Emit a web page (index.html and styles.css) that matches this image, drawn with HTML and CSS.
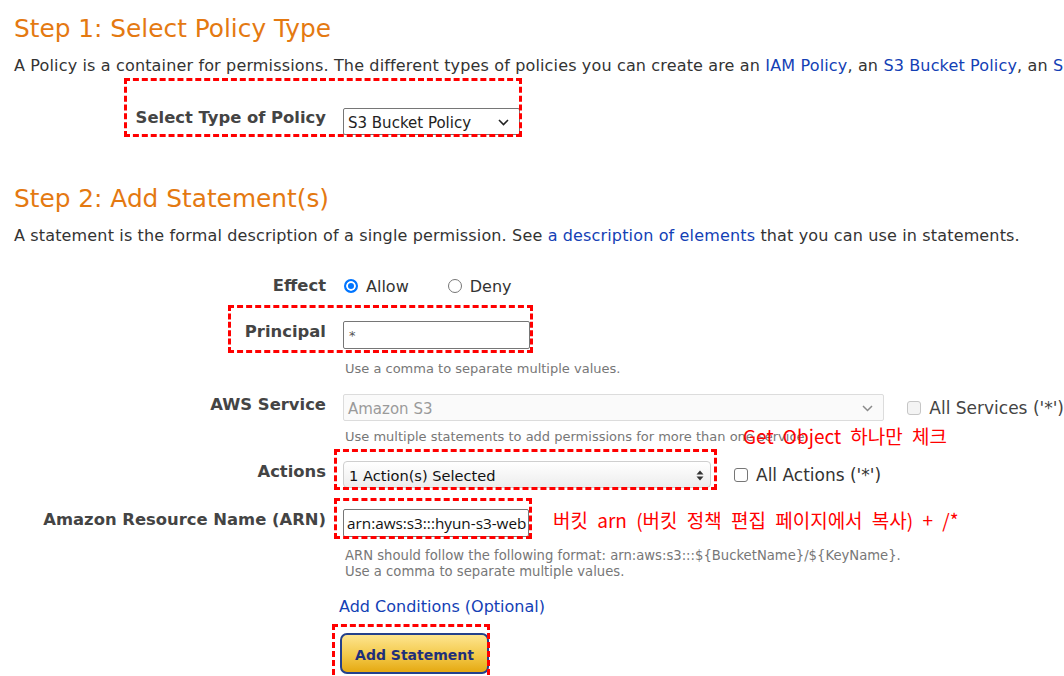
FILE: index.html
```html
<!DOCTYPE html>
<html lang="en">
<head>
<meta charset="utf-8">
<title>AWS Policy Generator</title>
<link rel="stylesheet" href="styles.css">
</head>
<body>
<div class="page">
  <section class="step">
    <h2 class="step-title">Step 1: Select Policy Type</h2>
    <p class="intro">A Policy is a container for permissions. The different types of policies you can create are an <a href="#">IAM Policy</a>, an <a href="#">S3 Bucket Policy</a>, an <a href="#">SNS Topic Policy</a>, a <a href="#">VPC Endpoint Policy</a>, and an <a href="#">SQS Queue Policy</a>.</p>
    <div class="field field-type">
      <div class="label">Select Type of Policy</div>
      <div class="control">
        <div class="select select-type">
          <span>S3 Bucket Policy</span>
          <svg class="chev" width="11" height="7" viewBox="0 0 11 7"><path d="M1 1l4.5 4.5L10 1" fill="none" stroke="#222" stroke-width="1.6"/></svg>
        </div>
      </div>
    </div>
  </section>

  <section class="step step-2">
    <h2 class="step-title">Step 2: Add Statement(s)</h2>
    <p class="intro">A statement is the formal description of a single permission. See <a href="#">a description of elements</a> that you can use in statements.</p>

    <div class="field field-effect">
      <div class="label">Effect</div>
      <div class="control radios">
        <span class="radio checked"></span><span class="radio-text">Allow</span>
        <span class="radio deny"></span><span class="radio-text">Deny</span>
      </div>
    </div>

    <div class="field field-principal">
      <div class="label">Principal</div>
      <div class="control">
        <div class="input input-principal">*</div>
        <div class="help">Use a comma to separate multiple values.</div>
      </div>
    </div>

    <div class="field field-service">
      <div class="label">AWS Service</div>
      <div class="control">
        <div class="line">
          <div class="select select-service">
            <span>Amazon S3</span>
            <svg class="chev" width="11" height="7" viewBox="0 0 11 7"><path d="M1 1l4.5 4.5L10 1" fill="none" stroke="#8a8a8a" stroke-width="1.5"/></svg>
          </div>
          <span class="check disabled"></span><span class="check-text">All Services ('*')</span>
        </div>
        <div class="help help-service">Use multiple statements to add permissions for more than one service.</div>
      </div>
    </div>

    <div class="field field-actions">
      <div class="label">Actions</div>
      <div class="control">
        <div class="line">
          <div class="select select-actions">
            <span>1 Action(s) Selected</span>
            <svg class="updown" width="8" height="11" viewBox="0 0 8 11"><path d="M4 0.5L7.5 4.5H0.5Z M4 10.5L7.5 6.5H0.5Z" fill="#333"/></svg>
          </div>
          <span class="check"></span><span class="check-text">All Actions ('*')</span>
        </div>
      </div>
    </div>

    <div class="field field-arn">
      <div class="label">Amazon Resource Name (ARN)</div>
      <div class="control">
        <div class="line">
          <div class="input input-arn">arn:aws:s3:::hyun-s3-web</div>
          <span class="note note-arn">버킷 arn (버킷 정책 편집 페이지에서 복사) + /*</span>
        </div>
        <div class="help help-arn">ARN should follow the following format: arn:aws:s3:::${BucketName}/${KeyName}.<br>Use a comma to separate multiple values.</div>
      </div>
    </div>

    <div class="field field-cond">
      <div class="label"></div>
      <div class="control">
        <a href="#" class="cond-link">Add Conditions (Optional)</a>
      </div>
    </div>

    <div class="field field-btn">
      <div class="label"></div>
      <div class="control">
        <button class="btn-add" type="button">Add Statement</button>
      </div>
    </div>
  </section>

  <span class="note note-actions">Get Object 하나만 체크</span>
  <div class="mark mark-type"></div>
  <div class="mark mark-principal"></div>
  <div class="mark mark-actions"></div>
  <div class="mark mark-arn"></div>
  <div class="mark mark-btn"></div>
</div>
</body>
</html>
```

FILE: styles.css
```css
html, body {
  margin: 0;
  padding: 0;
  background: #fff;
}
body {
  font-family: "DejaVu Sans", Verdana, sans-serif;
  font-size: 16px;
  color: #333;
  overflow: hidden;
}
.page {
  position: relative;
  width: 1064px;
  height: 676px;
  box-sizing: border-box;
  padding: 13px 0 0 14px;
  overflow: hidden;
}
a {
  color: #1340b5;
  text-decoration: none;
}
.step-title {
  margin: 0;
  font-size: 24.8px;
  font-weight: normal;
  line-height: 32px;
  color: #e47911;
  white-space: nowrap;
}
.intro {
  margin: 11px 0 0;
  line-height: 20px;
  letter-spacing: 0.15px;
  white-space: nowrap;
}
.step-2 {
  margin-top: 48px;
}
.field {
  display: grid;
  grid-template-columns: 312px 1fr;
  column-gap: 17px;
  align-items: start;
}
.label {
  text-align: right;
  font-weight: bold;
  font-size: 16.4px;
  line-height: 20px;
  color: #444;
  white-space: nowrap;
}
.control {
  min-width: 0;
}
.line {
  display: flex;
  align-items: center;
}
.field-type { margin-top: 32px; }
.field-effect { margin-top: 30px; }
.field-principal { margin-top: 25px; }
.field-service { margin-top: 17px; }
.field-actions { margin-top: 16px; }
.field-arn { margin-top: 21px; }
.field-cond { margin-top: 17px; }
.field-btn { margin-top: 16px; }

.field-principal .label,
.field-service .label,
.field-actions .label,
.field-arn .label { padding-top: 1px; }

/* select-like controls */
.select {
  display: flex;
  align-items: center;
  justify-content: space-between;
  box-sizing: border-box;
  height: 27px;
  padding: 0 10px 0 4px;
  white-space: nowrap;
  font-size: 15px;
}
.select-type {
  width: 177px;
  border: 1px solid #767676;
  border-radius: 2px;
  color: #222;
  padding-top: 3px;
}
.select-type .chev { margin-top: -2px; }
.select-service {
  width: 543px;
  border: 1px solid #dcdcdc;
  border-radius: 2px;
  background: #fafafa;
  color: #9a9a9a;
  padding-top: 2px;
}
.select-actions {
  width: 368px;
  border: 1px solid #cfcfcf;
  border-radius: 4px;
  background: linear-gradient(#ffffff, #ededed);
  color: #111;
  font-size: 14.6px;
  padding: 1px 6px 0 5px;
}

/* text inputs */
.input {
  box-sizing: border-box;
  height: 28px;
  border: 1px solid #767676;
  border-radius: 2px;
  padding: 0 4px;
  display: flex;
  align-items: center;
  white-space: nowrap;
  overflow: hidden;
}
.input-principal {
  width: 187px;
  font-size: 13px;
  color: #555;
  padding-left: 5px;
}
.input-arn {
  width: 186px;
  font-family: "Open Sans", "Noto Sans", sans-serif;
  font-size: 15.3px;
  color: #111;
  padding-left: 3px;
  flex: none;
}

/* help text */
.help {
  margin-top: 12px;
  font-size: 13px;
  line-height: 16px;
  color: #777;
  white-space: nowrap;
  padding-left: 2px;
}
.help-service { margin-top: 8px; }
.help-arn { margin-top: 11px; font-size: 13.2px; }

/* radios */
.radios {
  display: flex;
  align-items: center;
  height: 20px;
  font-size: 16px;
}
.radio {
  box-sizing: border-box;
  width: 14px;
  height: 14px;
  border-radius: 50%;
  border: 1px solid #767676;
  margin-left: 1px;
  flex: none;
}
.radio.checked {
  border: 2px solid #0075ff;
  background: #0075ff;
  box-shadow: inset 0 0 0 2px #fff;
}
.radio.deny { margin-left: 39px; }
.radio-text {
  margin-left: 8px;
  color: #333;
}

/* checkboxes */
.check {
  box-sizing: border-box;
  width: 14px;
  height: 14px;
  border: 1px solid #767676;
  border-radius: 3px;
  margin-left: 23px;
  flex: none;
}
.check.disabled {
  border-color: #c6c6c6;
  background: #f4f4f4;
}
.check-text {
  margin-left: 8px;
  font-size: 17px;
  color: #333;
  white-space: nowrap;
}
.field-service .check-text { color: #444; }

/* annotations */
.note {
  font-family: "Noto Sans CJK KR", "Noto Sans", sans-serif;
  font-size: 19px;
  word-spacing: 5px;
  color: #ff0000;
  white-space: nowrap;
}
.note-arn {
  margin-left: 24px;
  margin-top: -8px;
}
.note-actions {
  position: absolute;
  left: 743px;
  top: 422px;
}

.cond-link {
  display: block;
  font-size: 16px;
  line-height: 20px;
  margin-left: -4px;
  color: #1340b5;
}

.btn-add {
  box-sizing: border-box;
  width: 149px;
  height: 41px;
  margin-left: -3px;
  border: 2px solid #24418c;
  border-radius: 7px;
  background: linear-gradient(#fde58f, #f3c94a 55%, #e5a912);
  font-family: "DejaVu Sans", Verdana, sans-serif;
  font-weight: bold;
  font-size: 14px;
  color: #1f2f7a;
  padding: 2px 0 0;
}

/* red dashed highlight boxes */
.mark {
  position: absolute;
  box-sizing: border-box;
  border: 3px dashed #ff0000;
  pointer-events: none;
}
.mark-type { left: 124px; top: 78px; width: 398px; height: 59px; }
.mark-principal { left: 228px; top: 305px; width: 305px; height: 48px; }
.mark-actions { left: 334px; top: 449px; width: 383px; height: 41px; }
.mark-arn { left: 334px; top: 498px; width: 198px; height: 41px; }
.mark-btn { left: 332px; top: 624px; width: 158px; height: 60px; }
```
